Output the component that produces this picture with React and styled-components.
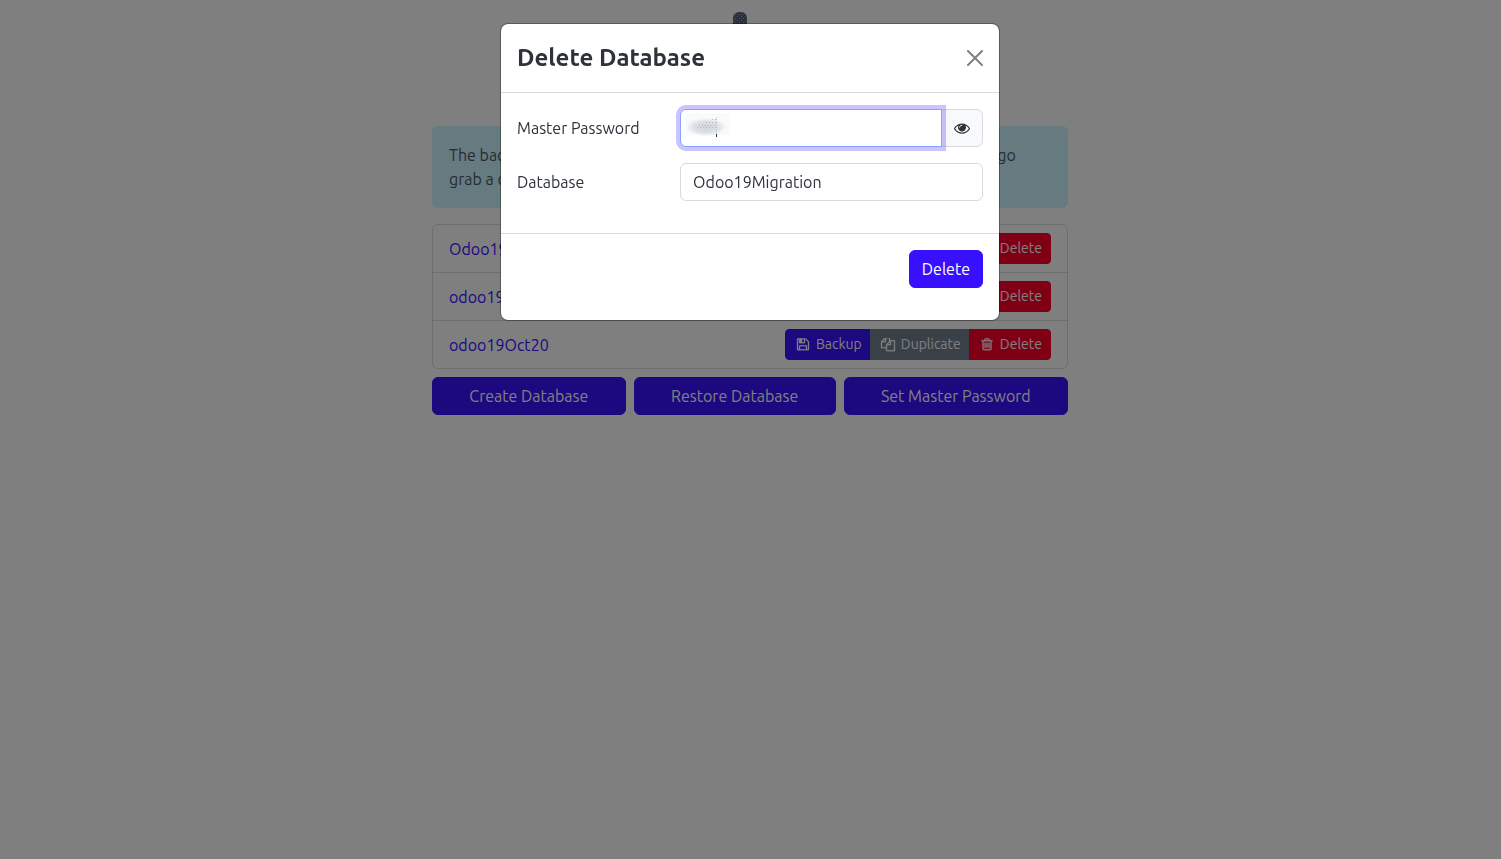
import { useState } from "react";
import styled, { createGlobalStyle } from "styled-components";

const GlobalStyle = createGlobalStyle`
  *,
  *::before,
  *::after {
    box-sizing: border-box;
  }
  body {
    margin: 0;
    padding-right: 1px;
    background: #ffffff;
    color: #2d323b;
    font-family: Ubuntu, "Noto Sans", "Open Sans", sans-serif;
    font-size: 16px;
    line-height: 24px;
  }
  button,
  input {
    font-family: inherit;
  }
`;

const Page = styled.main`
  max-width: 660px;
  margin: 0 auto;
  padding: 12px;
`;

const LogoBox = styled.div`
  height: 114px;
  padding-right: 20px;
  text-align: center;
`;

const Logo = styled.svg`
  width: 14px;
  height: 32px;
`;

const Alert = styled.div`
  margin-bottom: 16px;
  padding: 16px;
  border: 1px solid #caf6ff;
  border-radius: 6px;
  background: #caf6ff;
  color: #50566a;
`;

const List = styled.ul`
  margin: 0 0 8px;
  padding: 0;
  border: 1px solid #d8dadd;
  border-radius: 6px;
  list-style: none;
`;

const ListItem = styled.li`
  display: flex;
  align-items: center;
  justify-content: space-between;
  padding: 8px 16px;

  & + & {
    border-top: 1px solid #d8dadd;
  }
`;

const DbLink = styled.a`
  color: #3810ff;
  text-decoration: none;
`;

const Group = styled.div`
  display: flex;
`;

const colors = {
  primary: "#3810ff",
  secondary: "#74818f",
  danger: "#ff002a",
};

const Button = styled.button`
  padding: 6px 12px;
  border: 1px solid ${(props) => colors[props.$variant || "primary"]};
  border-radius: 6px;
  background: ${(props) => colors[props.$variant || "primary"]};
  color: #ffffff;
  font-size: 16px;
  line-height: 24px;
  &:hover {
    cursor: pointer;
  }
`;

const SmallButton = styled(Button)`
  display: flex;
  align-items: center;
  gap: 4px;
  padding: 4px 8px;
  border-radius: 0;
  font-size: 14px;
  line-height: 21px;

  &:first-child {
    border-radius: 4px 0 0 4px;
  }
  &:last-child {
    border-radius: 0 4px 4px 0;
  }
  & + & {
    margin-left: -1px;
  }
`;

const Actions = styled.div`
  display: flex;
  gap: 8px;

  ${Button} {
    flex: 1 1 auto;
  }
`;

const Icon = styled.svg`
  width: ${(props) => props.$box || 18}px;
  height: ${(props) => props.$size || 14}px;
  fill: currentColor;
`;

const Backdrop = styled.div`
  position: fixed;
  inset: 0;
  padding: 23px 1px 0 0;
  background: rgba(0, 0, 0, 0.5);
`;

const Dialog = styled.section`
  max-width: 500px;
  margin: 0 auto;
  border: 1px solid rgba(0, 0, 0, 0.3);
  border-radius: 8px;
  background: #ffffff;
  background-clip: padding-box;
`;

const Header = styled.header`
  display: flex;
  align-items: center;
  justify-content: space-between;
  padding: 16px;
  border-bottom: 1px solid #d8dadd;
`;

const Title = styled.h4`
  margin: 0;
  font-size: 24px;
  font-weight: 600;
  line-height: 36px;
`;

const Close = styled.button`
  display: flex;
  padding: 0;
  border: none;
  background: transparent;
  color: #808080;
  &:hover {
    cursor: pointer;
  }
`;

const Body = styled.div`
  display: grid;
  gap: 16px;
  padding: 16px 16px 32px;
`;

const Field = styled.div`
  display: grid;
  grid-template-columns: 1fr 65%;
  align-items: center;
`;

const Input = styled.input`
  width: 100%;
  height: 38px;
  padding: 6px 12px;
  border: 1px solid #d8dae2;
  border-radius: 6px;
  outline: none;
  background: #ffffff;
  color: #2d323b;
  font-size: 16px;
  line-height: 24px;
`;

const InputGroup = styled.div`
  position: relative;
  display: flex;
`;

const PasswordInput = styled(Input)`
  position: relative;
  z-index: 1;
  flex: 1;
  min-width: 0;
  border-color: #86a4ff;
  border-radius: 6px 0 0 6px;
  box-shadow: 0 0 0 4px rgba(56, 16, 255, 0.25);
`;

const Smudge = styled.svg`
  position: absolute;
  top: 4px;
  left: 6px;
  z-index: 2;
  width: 46px;
  height: 26px;
  pointer-events: none;
`;

const EyeButton = styled.button`
  display: flex;
  align-items: center;
  justify-content: center;
  width: 42px;
  margin-left: -1px;
  padding: 0;
  border: 1px solid #d8dae2;
  border-radius: 0 6px 6px 0;
  background: #f8f9fa;
  color: #2d323b;
  &:hover {
    cursor: pointer;
  }
`;

const Footer = styled.footer`
  display: flex;
  justify-content: flex-end;
  padding: 16px 16px 32px;
  border-top: 1px solid #d8dadd;
`;

const icons = {
  floppy:
    "M512 1536h768v-384h-768v384zm896 0h128v-896q0-14-10-38.5t-20-34.5l-281-281q-10-10-34-20t-39-10v416q0 40-28 68t-68 28h-576q-40 0-68-28t-28-68v-416h-128v1280h128v-416q0-40 28-68t68-28h832q40 0 68 28t28 68v416zm-384-928v-320q0-13-9.5-22.5t-22.5-9.5h-192q-13 0-22.5 9.5t-9.5 22.5v320q0 13 9.5 22.5t22.5 9.5h192q13 0 22.5-9.5t9.5-22.5zm640 32v928q0 40-28 68t-68 28h-1344q-40 0-68-28t-28-68v-1344q0-40 28-68t68-28h928q40 0 88 20t76 48l280 280q28 28 48 76t20 88z",
  files:
    "M1696 384q40 0 68 28t28 68v1216q0 40-28 68t-68 28h-960q-40 0-68-28t-28-68v-288h-544q-40 0-68-28t-28-68v-672q0-40 20-88t48-76l408-408q28-28 76-48t88-20h416q40 0 68 28t28 68v328q68-40 128-40h416zm-544 213l-299 299h299v-299zm-640-384l-299 299h299v-299zm196 647l316-316v-416h-384v416q0 40-28 68t-68 28h-416v640h512v-256q0-40 20-88t48-76zm956 804v-1152h-384v416q0 40-28 68t-68 28h-416v640h896z",
  trash:
    "M704 736v576q0 14-9 23t-23 9h-64q-14 0-23-9t-9-23v-576q0-14 9-23t23-9h64q14 0 23 9t9 23zm256 0v576q0 14-9 23t-23 9h-64q-14 0-23-9t-9-23v-576q0-14 9-23t23-9h64q14 0 23 9t9 23zm256 0v576q0 14-9 23t-23 9h-64q-14 0-23-9t-9-23v-576q0-14 9-23t23-9h64q14 0 23 9t9 23zm128 724v-948h-896v948q0 22 7 40.5t14.5 27 10.5 8.5h832q3 0 10.5-8.5t14.5-27 7-40.5zm-672-1076h448l-48-117q-7-9-17-11h-317q-10 2-17 11zm928 32v64q0 14-9 23t-23 9h-96v948q0 83-47 143.5t-113 60.5h-832q-66 0-113-58.5t-47-141.5v-952h-96q-14 0-23-9t-9-23v-64q0-14 9-23t23-9h309l70-167q15-37 54-63t79-26h320q40 0 79 26t54 63l70 167h309q14 0 23 9t9 23z",
  eye: "M1664 960q-152-236-381-353 61 104 61 225 0 185-131.5 316.5t-316.5 131.5-316.5-131.5-131.5-316.5q0-121 61-225-229 117-381 353 133 205 333.5 326.5t434.5 121.5 434.5-121.5 333.5-326.5zm-720-384q0-20-14-34t-34-14q-125 0-214.5 89.5t-89.5 214.5q0 20 14 34t34 14 34-14 14-34q0-86 61-147t147-61q20 0 34-14t14-34zm848 384q0 34-20 69-140 230-376.5 368.5t-499.5 138.5-499.5-139-376.5-368q-20-35-20-69t20-69q140-229 376.5-368t499.5-139 499.5 139 376.5 368q20 35 20 69z",
  close:
    "M.293.293a1 1 0 011.414 0L8 6.586 14.293.293a1 1 0 111.414 1.414L9.414 8l6.293 6.293a1 1 0 01-1.414 1.414L8 9.414l-6.293 6.293a1 1 0 01-1.414-1.414L6.586 8 .293 1.707a1 1 0 010-1.414z",
};

const databases = ["Odoo19Migration", "odoo19", "odoo19Oct20"];

const ButtonIcon = ({ name }) => (
  <Icon viewBox="0 96 1792 1792" aria-hidden="true">
    <path d={icons[name]} stroke="currentColor" strokeWidth="40" />
  </Icon>
);

const DatabaseRow = ({ name, onDelete }) => (
  <ListItem>
    <DbLink href="#">{name}</DbLink>
    <Group>
      <SmallButton type="button">
        <ButtonIcon name="floppy" />
        Backup
      </SmallButton>
      <SmallButton type="button" $variant="secondary">
        <ButtonIcon name="files" />
        Duplicate
      </SmallButton>
      <SmallButton type="button" $variant="danger" onClick={onDelete}>
        <ButtonIcon name="trash" />
        Delete
      </SmallButton>
    </Group>
  </ListItem>
);

const DeleteModal = ({ name, onClose }) => {
  const [database, setDatabase] = useState(name);
  const [password, setPassword] = useState("");
  const [visible, setVisible] = useState(false);

  return (
    <Backdrop>
      <Dialog role="dialog" aria-modal="true" aria-labelledby="delete-title">
        <Header>
          <Title id="delete-title">Delete Database</Title>
          <Close type="button" aria-label="Close" onClick={onClose}>
            <Icon viewBox="0 0 16 16" $size={16} $box={16}>
              <path d={icons.close} />
            </Icon>
          </Close>
        </Header>
        <Body>
          <Field>
            <label htmlFor="master-password">Master Password</label>
            <InputGroup>
              <PasswordInput
                id="master-password"
                type={visible ? "text" : "password"}
                value={password}
                onChange={(e) => setPassword(e.target.value)}
              />
              {password === "" && (
                <Smudge viewBox="0 0 46 26" aria-hidden="true">
                  <defs>
                    <radialGradient id="smudge">
                      <stop offset="0" stopColor="#d3d6dc" />
                      <stop offset="0.6" stopColor="#dcdfe4" />
                      <stop offset="1" stopColor="#f8fafa" />
                    </radialGradient>
                  </defs>
                  <rect width="44" height="22" rx="2" fill="#f9fbfb" />
                  <ellipse cx="20" cy="14" rx="20" ry="9" fill="url(#smudge)" />
                  <path
                    d="M11 14.5h20M13 12.5h18M20 9.5h12M26 6.5h6"
                    stroke="#b4b8c0"
                    strokeDasharray="1 2"
                  />
                  <path d="M30.5 4v18" stroke="#c4c8ce" strokeDasharray="1 1" />
                  <path d="M30.5 21v3" stroke="#2d323b" />
                </Smudge>
              )}
              <EyeButton
                type="button"
                aria-label="Show password"
                onClick={() => setVisible(!visible)}
              >
                <Icon viewBox="0 0 1792 1792" $size={16} $box={16}>
                  <path d={icons.eye} />
                </Icon>
              </EyeButton>
            </InputGroup>
          </Field>
          <Field>
            <label htmlFor="database">Database</label>
            <Input
              id="database"
              type="text"
              value={database}
              onChange={(e) => setDatabase(e.target.value)}
            />
          </Field>
        </Body>
        <Footer>
          <Button type="button">Delete</Button>
        </Footer>
      </Dialog>
    </Backdrop>
  );
};

const App = () => {
  const [isOpen, setIsOpen] = useState(true);

  return (
    <>
      <GlobalStyle />
      <Page>
        <LogoBox>
          <Logo viewBox="0 0 14 32" aria-hidden="true">
            <defs>
              <pattern id="grain" width="4" height="4" patternUnits="userSpaceOnUse">
                <path d="M0 0h1v1h-1zM2 2h1v1h-1z" fill="#8c9aaa" />
                <path d="M2 0h1v1h-1z" fill="#7a4a62" />
              </pattern>
            </defs>
            <rect width="14" height="32" rx="6" fill="#56657c" />
            <rect width="14" height="32" rx="6" fill="url(#grain)" />
          </Logo>
        </LogoBox>
        <Alert>
          The backup may take some time before being ready, so you will have time
          to go grab a coffee
        </Alert>
        <List>
          {databases.map((name) => (
            <DatabaseRow key={name} name={name} onDelete={() => setIsOpen(true)} />
          ))}
        </List>
        <Actions>
          <Button type="button">Create Database</Button>
          <Button type="button">Restore Database</Button>
          <Button type="button">Set Master Password</Button>
        </Actions>
      </Page>
      {isOpen && <DeleteModal name={databases[0]} onClose={() => setIsOpen(false)} />}
    </>
  );
};

export default App;
